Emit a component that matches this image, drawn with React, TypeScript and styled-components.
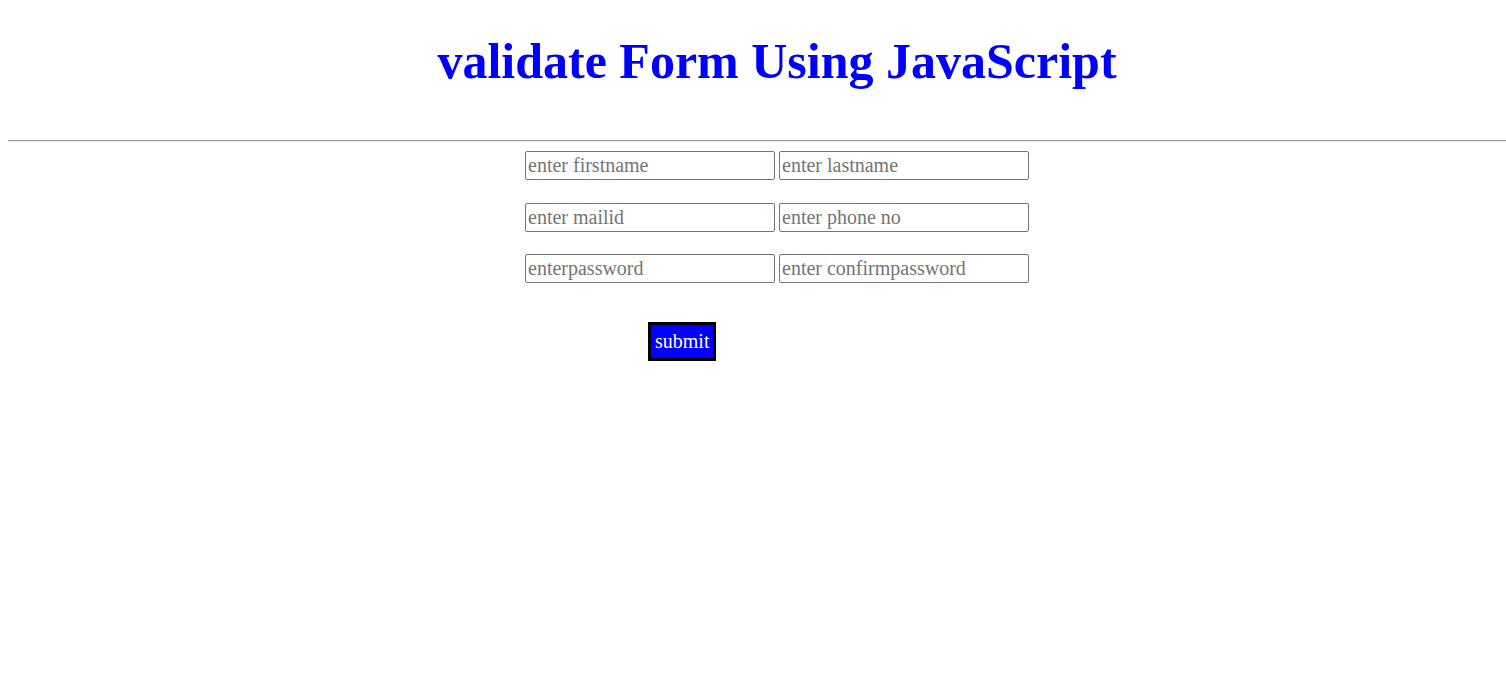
import styled, { createGlobalStyle } from "styled-components";

const GlobalStyle = createGlobalStyle`
  html {
    overflow: hidden;
  }
  body {
    margin: 0;
    font-family: "Liberation Serif", "Times New Roman", serif;
    background: #fff;
  }
`;

const Page = styled.div`
  width: 1538px;
  padding: 0 8px;
`;

const Title = styled.h1`
  margin: 33px 0 50px;
  text-align: center;
  color: blue;
  font-family: "Liberation Serif", "Times New Roman", serif;
  font-size: 50px;
  line-height: 57px;
  font-weight: bold;
`;

const Rule = styled.hr`
  margin: 0 0 9px;
  border: none;
  border-top: 1px solid #9a9a9a;
  border-bottom: 1px solid #eeeeee;
`;

const Form = styled.form`
  display: flex;
  flex-direction: column;
  align-items: center;
`;

const Row = styled.div`
  display: flex;
  gap: 4px;
  margin-bottom: 22.5px;
`;

const Field = styled.input`
  box-sizing: border-box;
  width: 250px;
  height: 29px;
  padding: 1px 2px;
  border: 1px solid #767676;
  border-radius: 2px;
  font-family: "Liberation Serif", "Times New Roman", serif;
  font-size: 20px;
  color: #000;
  outline: none;

  &::placeholder {
    color: #757575;
  }
`;

const Actions = styled.div`
  width: 504px;
  display: flex;
  margin-top: 16.5px;
  padding-left: 123px;
  box-sizing: border-box;
`;

const SubmitButton = styled.button`
  box-sizing: border-box;
  height: 39px;
  padding: 0 4px;
  background: blue;
  color: #fff;
  border: 3px solid #000;
  font-family: "Liberation Serif", "Times New Roman", serif;
  font-size: 20px;
  cursor: pointer;
`;

const fields: [string, string][] = [
  ["enter firstname", "enter lastname"],
  ["enter mailid", "enter phone no"],
  ["enterpassword", "enter confirmpassword"],
];

const App: React.FC = () => {
  return (
    <Page>
      <GlobalStyle />
      <Title>validate Form Using JavaScript</Title>
      <Rule />
      <Form onSubmit={(e) => e.preventDefault()}>
        {fields.map(([a, b]) => (
          <Row key={a}>
            <Field type="text" placeholder={a} />
            <Field type="text" placeholder={b} />
          </Row>
        ))}
        <Actions>
          <SubmitButton type="submit">submit</SubmitButton>
        </Actions>
      </Form>
    </Page>
  );
};

export default App;
